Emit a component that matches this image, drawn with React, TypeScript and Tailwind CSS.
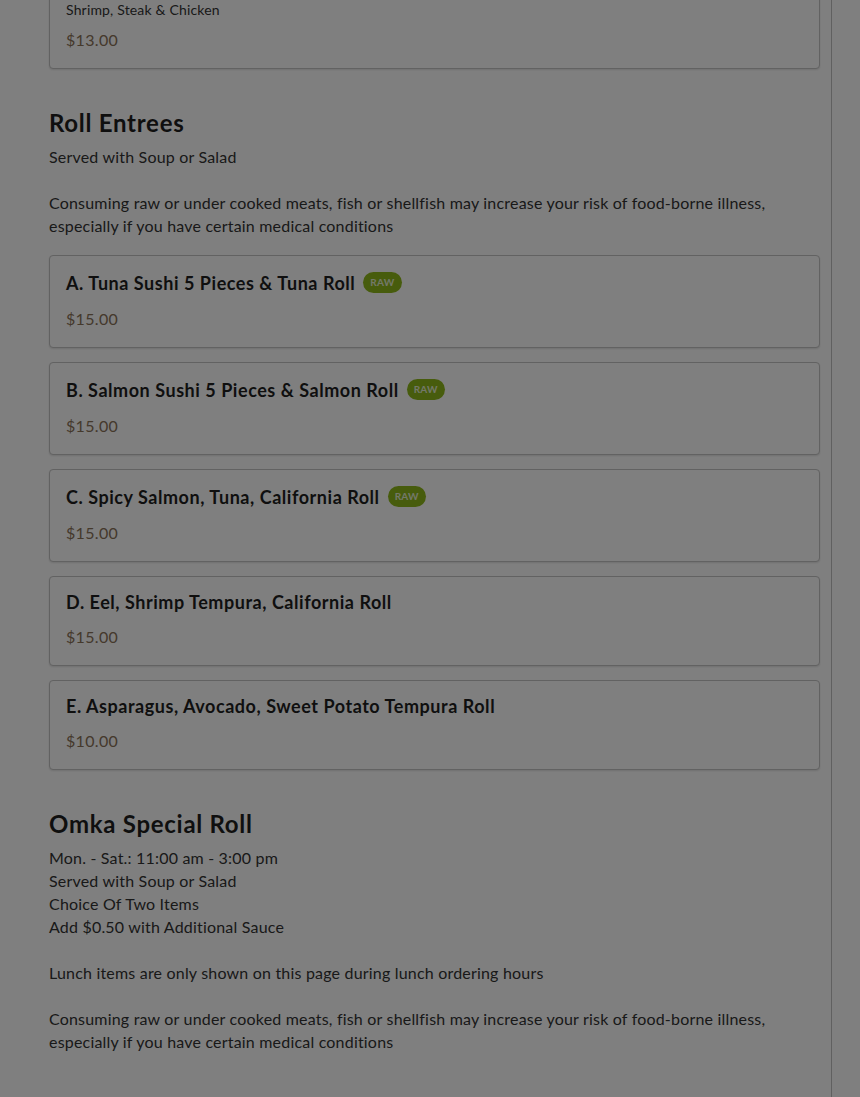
import React from "react";

type Item = { name: string; price: string; raw?: boolean; desc?: string };

const rollEntrees: Item[] = [
  { name: "A. Tuna Sushi 5 Pieces & Tuna Roll", price: "$15.00", raw: true },
  { name: "B. Salmon Sushi 5 Pieces & Salmon Roll", price: "$15.00", raw: true },
  { name: "C. Spicy Salmon, Tuna, California Roll", price: "$15.00", raw: true },
  { name: "D. Eel, Shrimp Tempura, California Roll", price: "$15.00" },
  { name: "E. Asparagus, Avocado, Sweet Potato Tempura Roll", price: "$10.00" },
];

const warning =
  "Consuming raw or under cooked meats, fish or shellfish may increase your risk of food-borne illness, especially if you have certain medical conditions";

function MenuCard({ item }: { item: Item }) {
  return (
    <div className="rounded border border-[#c4c4c4] bg-white px-4 pt-4 pb-4 shadow-[0_1px_2px_rgba(0,0,0,0.12)]">
      <div className="flex min-h-[18px] items-center gap-2">
        <h3 className="text-[18px] leading-[18px] font-bold tracking-[0.03em] text-[#1e1e1e]">{item.name}</h3>
        {item.raw && (
          <span className="flex h-[21px] items-center rounded-full bg-[#8fb81a] px-[7px] text-[10px] font-bold tracking-wide text-[#e6f0d2]">
            RAW
          </span>
        )}
      </div>
      <p className="mt-[14px] text-base leading-6 tracking-[0.02em] text-[#8a7258]">{item.price}</p>
    </div>
  );
}

function Section({ title, lines, children }: { title: string; lines: string; children?: React.ReactNode }) {
  return (
    <section className="mt-[38px]">
      <h2 className="text-2xl leading-8 font-bold tracking-[0.03em] text-[#1e1e1e]">{title}</h2>
      <p className="mt-[6px] whitespace-pre-line text-base leading-[23px] tracking-[0.012em] text-[#333]">{lines}</p>
      {children && <div className="mt-[18px] flex flex-col gap-[14px]">{children}</div>}
    </section>
  );
}

export default function App() {
  return (
    <div className="relative min-h-screen overflow-hidden bg-white font-['Lato',sans-serif]">
      <div className="flex">
        <div className="w-[832px] shrink-0 border-r border-[#c0c0c0] pl-[49px] pr-[11px]">
          <div className="-mt-[17px] rounded border border-[#c4c4c4] bg-white px-4 pt-4 pb-4 shadow-[0_1px_2px_rgba(0,0,0,0.12)]">
            <p className="text-sm leading-5 tracking-[0.012em] text-[#333]">Shrimp, Steak &amp; Chicken</p>
            <p className="mt-2 text-base leading-6 tracking-[0.02em] text-[#8a7258]">$13.00</p>
          </div>

          <Section title="Roll Entrees" lines={"Served with Soup or Salad\n\n" + warning}>
            {rollEntrees.map((it) => (
              <MenuCard key={it.name} item={it} />
            ))}
          </Section>

          <Section
            title="Omka Special Roll"
            lines={
              "Mon. - Sat.: 11:00 am - 3:00 pm\nServed with Soup or Salad\nChoice Of Two Items\nAdd $0.50 with Additional Sauce\n\nLunch items are only shown on this page during lunch ordering hours\n\n" +
              warning
            }
          />
          <div className="h-[80px]" />
        </div>
        <div className="flex-1" />
      </div>
      <div className="fixed inset-0 bg-black/50" />
    </div>
  );
}
